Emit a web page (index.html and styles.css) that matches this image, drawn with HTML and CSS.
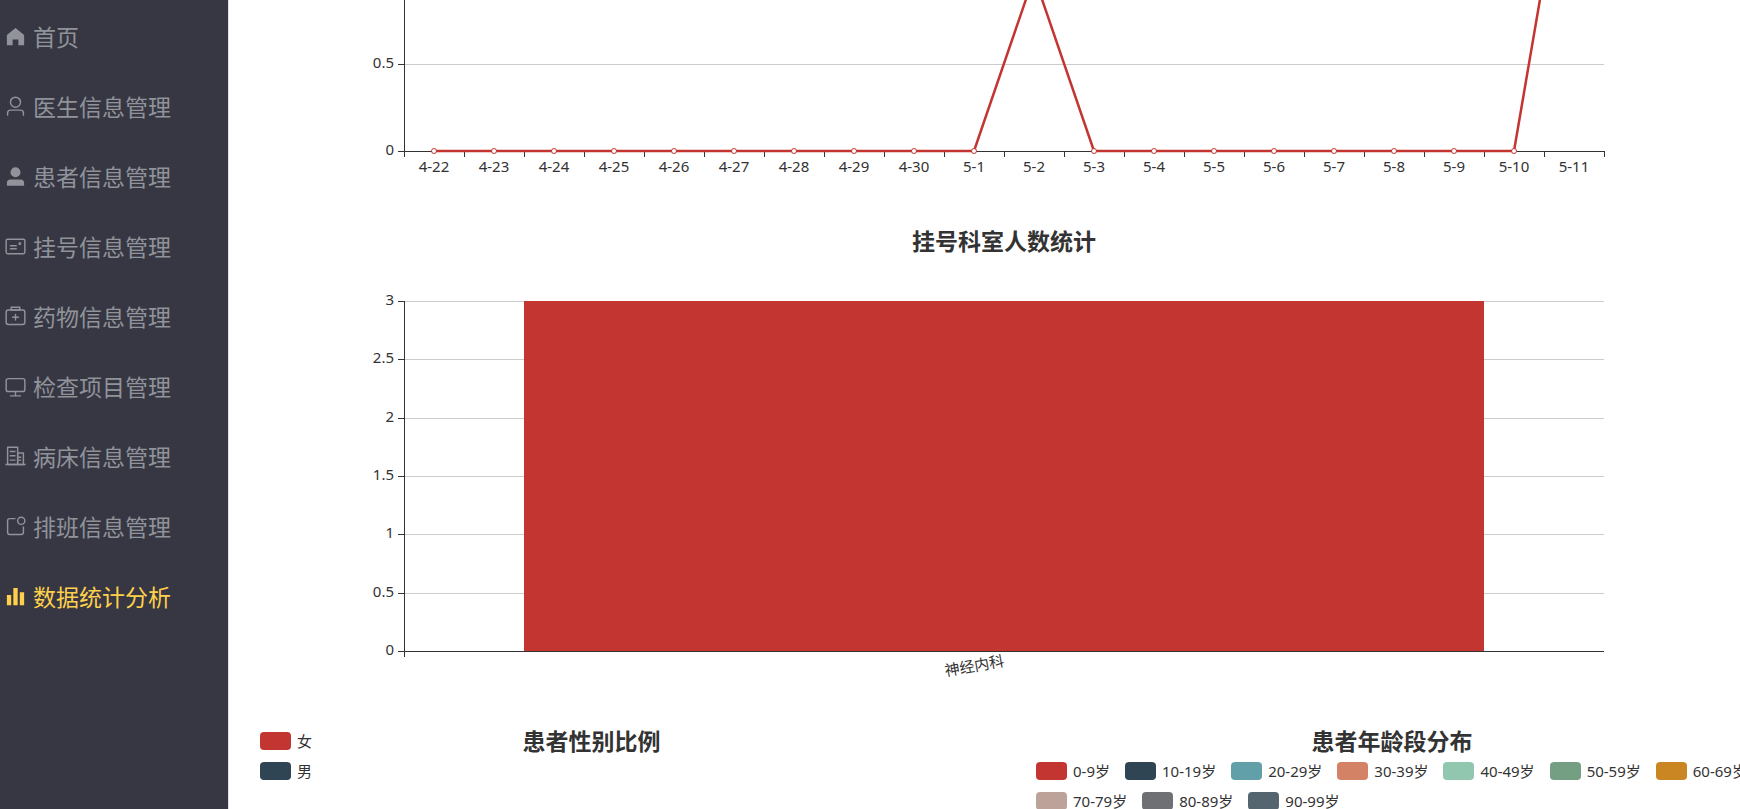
FILE: index.html
```
<!DOCTYPE html>
<html lang="zh-CN">
<head>
    <meta charset="UTF-8">
    <meta name="viewport" content="width=device-width, initial-scale=1.0">
    <title>数据统计分析</title>
    <link rel="stylesheet" href="styles.css">
</head>
<body>

    <nav class="sidebar">
        <a class="menu-item" href="#">
            <svg class="icon" viewBox="0 0 1024 1024"><path d="M512 128 128 447.936V896h255.936V640H640v256h255.936V447.936z"/></svg>
            <span>首页</span>
        </a>
        <a class="menu-item" href="#">
            <svg class="icon" viewBox="0 0 1024 1024"><path d="M512 512a192 192 0 1 0 0-384 192 192 0 0 0 0 384zm0 64a256 256 0 1 1 0-512 256 256 0 0 1 0 512zm320 320v-96a96 96 0 0 0-96-96H288a96 96 0 0 0-96 96v96a32 32 0 1 1-64 0v-96a160 160 0 0 1 160-160h448a160 160 0 0 1 160 160v96a32 32 0 1 1-64 0z"/></svg>
            <span>医生信息管理</span>
        </a>
        <a class="menu-item" href="#">
            <svg class="icon" viewBox="0 0 1024 1024"><path d="M288 320a224 224 0 1 0 448 0 224 224 0 1 0-448 0zm544 608H160a32 32 0 0 1-32-32v-96a160 160 0 0 1 160-160h448a160 160 0 0 1 160 160v96a32 32 0 0 1-32 32z"/></svg>
            <span>患者信息管理</span>
        </a>
        <a class="menu-item" href="#">
            <svg class="icon" viewBox="0 0 1024 1024"><path d="M160 224a32 32 0 0 0-32 32v512a32 32 0 0 0 32 32h704a32 32 0 0 0 32-32V256a32 32 0 0 0-32-32H160zm0-64h704a96 96 0 0 1 96 96v512a96 96 0 0 1-96 96H160a96 96 0 0 1-96-96V256a96 96 0 0 1 96-96z"/><path d="M704 320a64 64 0 1 1 0 128 64 64 0 0 1 0-128zM288 448h256q32 0 32 32t-32 32H288q-32 0-32-32t32-32zm0 128h256q32 0 32 32t-32 32H288q-32 0-32-32t32-32z"/></svg>
            <span>挂号信息管理</span>
        </a>
        <a class="menu-item" href="#">
            <svg class="icon" viewBox="0 0 1024 1024"><path d="M192 256a64 64 0 0 0-64 64v448a64 64 0 0 0 64 64h640a64 64 0 0 0 64-64V320a64 64 0 0 0-64-64H192zm0-64h640a128 128 0 0 1 128 128v448a128 128 0 0 1-128 128H192A128 128 0 0 1 64 768V320a128 128 0 0 1 128-128z"/><path d="M544 512h96a32 32 0 0 1 0 64h-96v96a32 32 0 0 1-64 0v-96h-96a32 32 0 0 1 0-64h96v-96a32 32 0 0 1 64 0v96zM352 128v64h320v-64H352zm-32-64h384a32 32 0 0 1 32 32v128a32 32 0 0 1-32 32H320a32 32 0 0 1-32-32V96a32 32 0 0 1 32-32z"/></svg>
            <span>药物信息管理</span>
        </a>
        <a class="menu-item" href="#">
            <svg class="icon" viewBox="0 0 1024 1024"><path d="M544 768v128h192a32 32 0 1 1 0 64H288a32 32 0 1 1 0-64h192V768H192A128 128 0 0 1 64 640V256a128 128 0 0 1 128-128h640a128 128 0 0 1 128 128v384a128 128 0 0 1-128 128H544zM192 192a64 64 0 0 0-64 64v384a64 64 0 0 0 64 64h640a64 64 0 0 0 64-64V256a64 64 0 0 0-64-64H192z"/></svg>
            <span>检查项目管理</span>
        </a>
        <a class="menu-item" href="#">
            <svg class="icon" viewBox="0 0 1024 1024"><path d="M192 128v704h384V128H192zm-32-64h448a32 32 0 0 1 32 32v768a32 32 0 0 1-32 32H160a32 32 0 0 1-32-32V96a32 32 0 0 1 32-32z"/><path d="M256 256h256v64H256v-64zm0 192h256v64H256v-64zm0 192h256v64H256v-64zm384-128h128v64H640v-64zm0 128h128v64H640v-64zM64 832h896v64H64v-64z"/><path d="M640 384v448h192V384H640zm-32-64h256a32 32 0 0 1 32 32v512a32 32 0 0 1-32 32H608a32 32 0 0 1-32-32V352a32 32 0 0 1 32-32z"/></svg>
            <span>病床信息管理</span>
        </a>
        <a class="menu-item" href="#">
            <svg class="icon" viewBox="0 0 1024 1024"><path d="M512 128v64H256a64 64 0 0 0-64 64v512a64 64 0 0 0 64 64h512a64 64 0 0 0 64-64V512h64v256a128 128 0 0 1-128 128H256a128 128 0 0 1-128-128V256a128 128 0 0 1 128-128h256z"/><path d="M768 384a128 128 0 1 0 0-256 128 128 0 0 0 0 256zm0 64a192 192 0 1 1 0-384 192 192 0 0 1 0 384z"/></svg>
            <span>排班信息管理</span>
        </a>
        <a class="menu-item active" href="#">
            <svg class="icon" viewBox="0 0 1024 1024"><path d="M416 896V128h192v768H416zm-288 0V448h192v448H128zm576 0V320h192v576H704z"/></svg>
            <span>数据统计分析</span>
        </a>
    </nav>

    <main class="main">
        <div class="charts">
            <section class="chart-line">
                <svg class="plot" id="line-chart"></svg>
            </section>

            <section class="chart-bar">
                <h2 class="chart-title">挂号科室人数统计</h2>
                <svg class="plot" id="bar-chart"></svg>
            </section>

            <div class="pie-row">
                <section class="pie-gender">
                    <h2 class="chart-title">患者性别比例</h2>
                    <ul class="legend legend-vertical">
                        <li><i class="swatch red"></i>女</li>
                        <li><i class="swatch navy"></i>男</li>
                    </ul>
                </section>
                <section class="pie-age">
                    <h2 class="chart-title">患者年龄段分布</h2>
                    <ul class="legend">
                        <li><i class="swatch red"></i>0-9岁</li>
                        <li><i class="swatch navy"></i>10-19岁</li>
                        <li><i class="swatch teal"></i>20-29岁</li>
                        <li><i class="swatch salmon"></i>30-39岁</li>
                        <li><i class="swatch mint"></i>40-49岁</li>
                        <li><i class="swatch green"></i>50-59岁</li>
                        <li><i class="swatch amber"></i>60-69岁</li>
                        <li><i class="swatch rose"></i>70-79岁</li>
                        <li><i class="swatch gray"></i>80-89岁</li>
                        <li><i class="swatch slate"></i>90-99岁</li>
                    </ul>
                </section>
            </div>
        </div>
    </main>

    <script>
        const plotHeight = 350;

        function add(svg, tag, attrs, text) {
            const el = document.createElementNS('http://www.w3.org/2000/svg', tag);
            for (const key in attrs) {
                el.setAttribute(key, attrs[key]);
            }
            if (text !== undefined) {
                el.textContent = text;
            }
            svg.appendChild(el);
        }

        function addLine(svg, cls, x1, y1, x2, y2) {
            add(svg, 'line', { class: cls, x1: x1, y1: y1, x2: x2, y2: y2 });
        }

        // Grid lines, ticks and labels of the value axis
        function drawValueAxis(svg, max) {
            for (let v = 0; v <= max; v += 0.5) {
                const y = Math.round(plotHeight - v / max * plotHeight);
                if (v > 0) {
                    addLine(svg, 'grid', 0, y, '100%', y);
                }
                addLine(svg, 'axis', -6, y, 0, y);
                add(svg, 'text', { class: 'label', x: -10, y: y + 4, 'text-anchor': 'end' }, v);
            }
        }

        function drawLineChart() {
            const svg = document.getElementById('line-chart');
            const days = ['4-22', '4-23', '4-24', '4-25', '4-26', '4-27', '4-28', '4-29', '4-30', '5-1',
                '5-2', '5-3', '5-4', '5-5', '5-6', '5-7', '5-8', '5-9', '5-10', '5-11'];
            const counts = [0, 0, 0, 0, 0, 0, 0, 0, 0, 0, 1, 0, 0, 0, 0, 0, 0, 0, 0, 2];
            const step = 100 / days.length;
            const px = i => (i + 0.5) * step + '%';
            const py = i => plotHeight - counts[i] / 2 * plotHeight;

            drawValueAxis(svg, 2);
            addLine(svg, 'axis', 0, 0, 0, plotHeight);
            addLine(svg, 'axis', 0, plotHeight, '100%', plotHeight);
            for (let i = 0; i <= days.length; i++) {
                addLine(svg, 'axis', i * step + '%', plotHeight, i * step + '%', plotHeight + 6);
            }
            days.forEach((day, i) => {
                add(svg, 'text', { class: 'label', x: px(i), y: plotHeight + 21, 'text-anchor': 'middle' }, day);
                if (i > 0) {
                    addLine(svg, 'series', px(i - 1), py(i - 1), px(i), py(i));
                }
            });
            days.forEach((day, i) => {
                add(svg, 'circle', { class: 'point', cx: px(i), cy: py(i), r: 2.5 });
            });
        }

        function drawBarChart() {
            const svg = document.getElementById('bar-chart');
            drawValueAxis(svg, 3);
            add(svg, 'rect', { class: 'bar', x: '10%', y: 0, width: '80%', height: plotHeight });
            addLine(svg, 'axis', 0, 0, 0, plotHeight + 6);
            addLine(svg, 'axis', 0, plotHeight, '100%', plotHeight);

            // Nested svg so the label can rotate around the middle of the axis
            add(svg, 'svg', { x: '50%', y: plotHeight + 10, class: 'rotated' });
            add(svg.lastChild, 'text', { class: 'label', y: 5, 'text-anchor': 'end', transform: 'rotate(-10)' }, '神经内科');
        }

        drawLineChart();
        drawBarChart();
    </script>

</body>
</html>
```
FILE: styles.css
```
body {
    font-family: "Noto Sans", "Noto Sans CJK SC", sans-serif;
    display: flex;
    height: 100vh;
    margin: 0;
    overflow: hidden;
    background-color: white;
    color: #333;
}
.sidebar {
    flex: 0 0 229px;
    box-sizing: border-box;
    padding-top: 1px;
    border-right: 1px solid #dcdfe6;
    background-color: #363743;
}
.menu-item {
    display: flex;
    align-items: center;
    gap: 6px;
    height: 70px;
    padding-left: 4px;
    font-family: "Noto Sans CJK SC", sans-serif;
    font-size: 23px;
    color: #909399;
    text-decoration: none;
}
.menu-item.active {
    color: #ffd04b;
}
.icon {
    width: 23px;
    height: 23px;
    fill: currentColor;
}
.main {
    flex: 1;
    min-width: 0;
    padding-left: 25px;
    overflow: hidden;
}
/* the charts run a little past the window's right edge */
.charts {
    margin-right: -14px;
}
.chart-title {
    margin: 0;
    padding-bottom: 2px;
    font-family: "Noto Sans CJK SC", sans-serif;
    font-size: 23px;
    line-height: 28px;
    font-weight: bold;
    text-align: center;
}
.plot {
    display: block;
    flex-shrink: 0;
    width: 80%;
    height: 350px;
    margin: 0 auto;
    overflow: visible;
}
.chart-line {
    display: flex;
    align-items: flex-end;
    box-sizing: border-box;
    height: 226px;
    padding-bottom: 75px;
}
.chart-bar .plot {
    margin-top: 45px;
    margin-bottom: 75px;
}
.grid {
    stroke: #ccc;
    shape-rendering: crispEdges;
}
.axis {
    stroke: #333;
    shape-rendering: crispEdges;
}
.label {
    font-size: 15px;
    fill: #333;
}
.series {
    stroke: #c23531;
    stroke-width: 2.5;
    stroke-linecap: round;
}
.point {
    fill: white;
    stroke: #c23531;
}
.bar {
    fill: #c23531;
}
.rotated {
    overflow: visible;
}
.pie-row {
    display: flex;
    justify-content: space-between;
}
.pie-gender {
    display: grid;
    flex: 0 0 45%;
    align-items: start;
}
.pie-gender .chart-title,
.pie-gender .legend {
    grid-area: 1 / 1;
}
.pie-age {
    flex: 0 1 724px;
}
.legend {
    display: flex;
    flex-wrap: wrap;
    column-gap: 15px;
    margin: 0;
    padding: 0 0 0 6px;
    list-style: none;
    font-size: 15px;
    line-height: 28px;
}
.legend-vertical {
    flex-direction: column;
}
.legend li {
    display: flex;
    align-items: center;
    gap: 6px;
    height: 30px;
}
.swatch {
    width: 31px;
    height: 18px;
    border-radius: 4px;
}
.red { background-color: #c23531; }
.navy { background-color: #2f4554; }
.teal { background-color: #61a0a8; }
.salmon { background-color: #d48265; }
.mint { background-color: #91c7ae; }
.green { background-color: #749f83; }
.amber { background-color: #ca8622; }
.rose { background-color: #bda29a; }
.gray { background-color: #6e7074; }
.slate { background-color: #546570; }
```
